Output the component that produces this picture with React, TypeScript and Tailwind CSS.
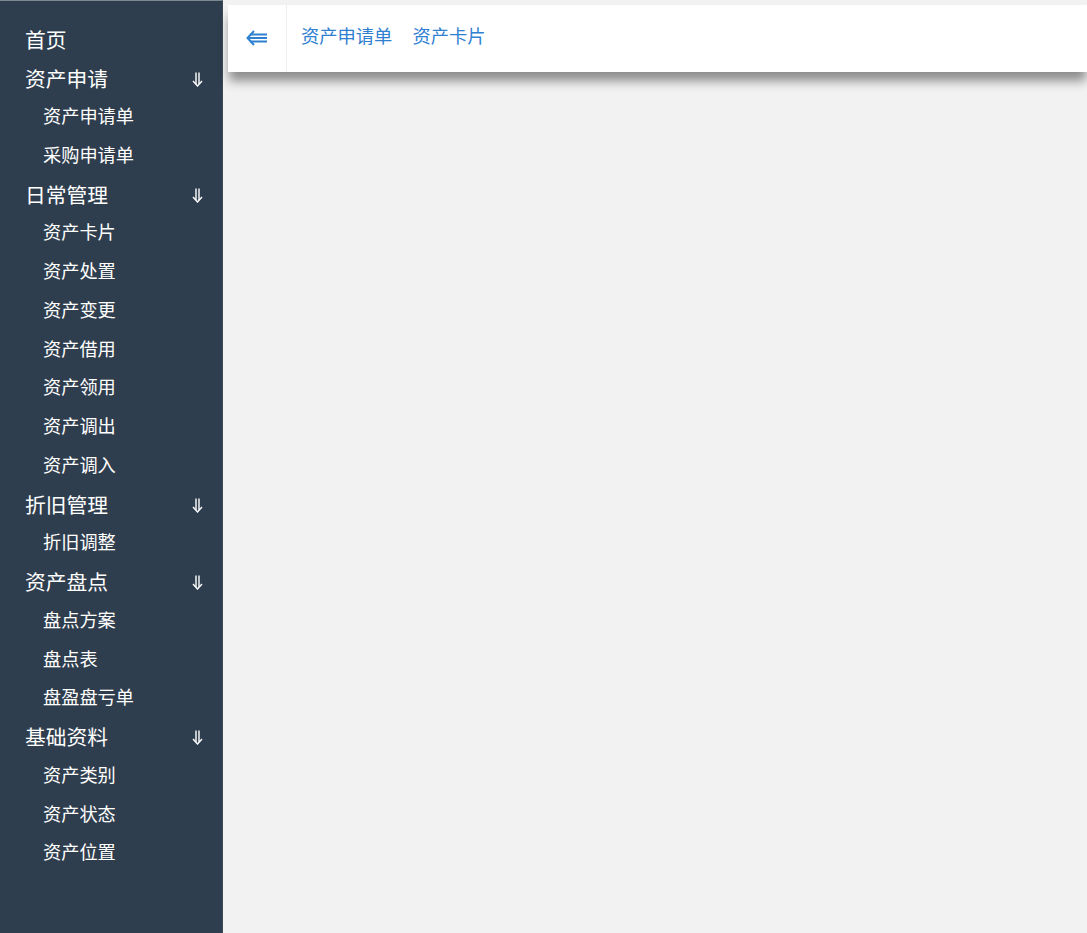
import React from "react";

type Item = { label: string; top?: boolean; arrow?: boolean };

const items: Item[] = [
  { label: "首页", top: true },
  { label: "资产申请", top: true, arrow: true },
  { label: "资产申请单" },
  { label: "采购申请单" },
  { label: "日常管理", top: true, arrow: true },
  { label: "资产卡片" },
  { label: "资产处置" },
  { label: "资产变更" },
  { label: "资产借用" },
  { label: "资产领用" },
  { label: "资产调出" },
  { label: "资产调入" },
  { label: "折旧管理", top: true, arrow: true },
  { label: "折旧调整" },
  { label: "资产盘点", top: true, arrow: true },
  { label: "盘点方案" },
  { label: "盘点表" },
  { label: "盘盈盘亏单" },
  { label: "基础资料", top: true, arrow: true },
  { label: "资产类别" },
  { label: "资产状态" },
  { label: "资产位置" },
];

function DownArrow() {
  return (
    <svg width="11" height="15" viewBox="0 0 11 15" fill="none" stroke="#ffffff" strokeWidth="1.4">
      <path d="M4 0.5V12M7 0.5V12" />
      <path d="M1 9L5.5 14L10 9" strokeLinejoin="miter" />
    </svg>
  );
}

function LeftArrow() {
  return (
    <svg width="22" height="16" viewBox="0 0 22 16" fill="none" stroke="#2f80d1" strokeWidth="2">
      <path d="M8 1L1.5 8L8 15" />
      <path d="M4 4.5H21M2.5 8H21M4 11.5H21" />
    </svg>
  );
}

export default function App() {
  return (
    <div
      className="flex h-[933px] w-full bg-[#f2f2f2] overflow-hidden"
      style={{ fontFamily: '"Microsoft YaHei", "Noto Sans CJK SC", "Noto Sans", sans-serif' }}
    >
      <aside className="w-[223px] shrink-0 h-full bg-[#2f3e4e] border-t border-[#7d8792] border-r border-r-[#3d4a57] pt-[19px]">
        {items.map((it) =>
          it.top ? (
            <div
              key={it.label}
              className="h-[38.75px] flex items-center justify-between pl-[25px] pr-[19px] text-white text-[20.75px]"
            >
              <span>{it.label}</span>
              {it.arrow && (
                <span className="flex items-center pt-[2px]">
                  <DownArrow />
                </span>
              )}
            </div>
          ) : (
            <div
              key={it.label}
              className="h-[38.75px] flex items-center pl-[43px] pb-[2px] text-white text-[18.2px]"
            >
              {it.label}
            </div>
          )
        )}
      </aside>
      <main className="flex-1 min-w-0 pt-[5px] pl-[5px]">
        <div className="h-[67px] bg-white flex shadow-[0_10px_10px_-1px_rgba(0,0,0,0.42)]">
          <div className="w-[59px] h-full flex items-center justify-center border-r border-[#eeeeee] pb-[1px]">
            <LeftArrow />
          </div>
          <div className="flex items-start pt-[17px] pl-[14px] gap-[20px] text-[#2f80d1] text-[18.3px] leading-[26px]">
            <span>资产申请单</span>
            <span>资产卡片</span>
          </div>
        </div>
      </main>
    </div>
  );
}
